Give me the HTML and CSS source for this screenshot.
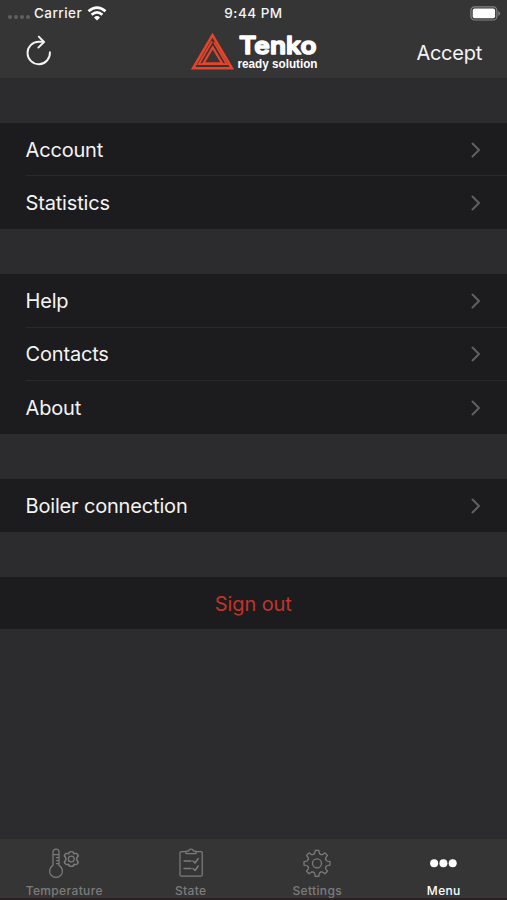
FILE: index.html
```html
<!DOCTYPE html>
<html lang="en">
<head>
<meta charset="utf-8">
<title>Tenko</title>
<link rel="stylesheet" href="styles.css">
</head>
<body>
<div class="app">
  <header class="header">
    <div class="status">
      <div class="carrier">
        <span class="dots"><i></i><i></i><i></i><i></i></span>
        <span class="carrier-name">Carrier</span>
        <svg class="wifi" width="20" height="15" viewBox="0 0 20 15" fill="none" stroke="#fff" stroke-width="2.8"><path d="M1.5 5.3Q10-2 18.5 5.3"/><path d="M4.6 8.7Q10 4 15.4 8.7"/><path d="M7 11.4Q10 8.8 13 11.4L10 14.4Z" fill="#fff" stroke="none"/></svg>
      </div>
      <span class="time">9:44 PM</span>
      <svg class="battery" width="31" height="15" viewBox="0 0 31 15"><rect x=".9" y=".8" width="26" height="13.2" rx="3.8" fill="none" stroke="#858585" stroke-width="1.2"/><rect x="2.7" y="2.6" width="22.4" height="9.6" rx="2" fill="#fff"/><path d="M28.3 5Q30 5.6 30 7.4T28.3 9.8Z" fill="#858585"/></svg>
    </div>
    <div class="nav">
      <svg class="refresh" width="26" height="32" viewBox="0 0 26 32" fill="none" stroke="#f4f4f4" stroke-width="1.9" stroke-linecap="round" stroke-linejoin="round"><path d="M23.9 17.3A11.2 11.2 0 1 1 12.7 6.8H17.6"/><path d="M12.8 1.6L18 7L12.3 12.6"/></svg>
      <svg class="logo" width="128" height="40" viewBox="0 0 128 40">
        <g fill="none" stroke="#e8432b"><path d="M21.5 3.2L2.1 36.3H40.9Z" stroke-width="2.6"/><path d="M21.1 9.2L7.8 32.2H35.8L23 10.2" stroke-width="1.8"/><path d="M21.7 15.5L12.3 31.5H31.3Z" stroke-width="2.3"/></g>
        <text class="brand" x="48" y="21.5" textLength="77.5" lengthAdjust="spacingAndGlyphs">Tenko</text>
        <text class="tagline" x="46.5" y="35.5" textLength="80" lengthAdjust="spacingAndGlyphs">ready solution</text>
      </svg>
      <span class="accept">Accept</span>
    </div>
  </header>
  <main class="content">
    <section class="group">
      <div class="row"><span>Account</span><svg class="chev" viewBox="0 0 10 16"><path d="M1.5 1.5L8 8L1.5 14.5"/></svg></div>
      <div class="row"><span>Statistics</span><svg class="chev" viewBox="0 0 10 16"><path d="M1.5 1.5L8 8L1.5 14.5"/></svg></div>
    </section>
    <section class="group">
      <div class="row"><span>Help</span><svg class="chev" viewBox="0 0 10 16"><path d="M1.5 1.5L8 8L1.5 14.5"/></svg></div>
      <div class="row"><span>Contacts</span><svg class="chev" viewBox="0 0 10 16"><path d="M1.5 1.5L8 8L1.5 14.5"/></svg></div>
      <div class="row"><span>About</span><svg class="chev" viewBox="0 0 10 16"><path d="M1.5 1.5L8 8L1.5 14.5"/></svg></div>
    </section>
    <section class="group">
      <div class="row"><span>Boiler connection</span><svg class="chev" viewBox="0 0 10 16"><path d="M1.5 1.5L8 8L1.5 14.5"/></svg></div>
    </section>
    <section class="group">
      <div class="row signout"><span>Sign out</span></div>
    </section>
  </main>
  <nav class="tabs">
    <div class="tab">
      <svg width="32" height="32" viewBox="0 0 32 32"><path d="M5 18.4V5A3 3 0 0 1 11 5V18.4A6.4 6.4 0 1 1 5 18.4ZM5 7.5H11M8.5 10.5H11M8.5 13.5H11M8.5 16.5H11"/><g transform="translate(23.3 12)"><circle r="2.9"/><path transform="scale(1.24 1.03)" d="M-2.2-5C-2-8 2-8 2.2-5C4.8-6.4 6.7-3.1 4.4-1.3V1.3C6.7 3.1 4.8 6.4 2.2 5C2 8-2 8-2.2 5C-4.8 6.4-6.7 3.1-4.4 1.3V-1.3C-6.7-3.1-4.8-6.4-2.2-5Z"/></g></svg>
      <span>Temperature</span>
    </div>
    <div class="tab">
      <svg width="32" height="32" viewBox="0 0 32 32"><path d="M11 4.5H6.2Q5 4.5 5 5.7V28Q5 29.2 6.2 29.2H26Q27.2 29.2 27.2 28V5.7Q27.2 4.5 26 4.5H21M11 4V6.5H21V4H18.3Q18.3 2 16 2T13.7 4Z"/><path d="M9 14H16M9 21.5H16M18 14L20 16L23.3 11.5M18 21.5L20 23.5L23.3 19" stroke-width="1.5"/></svg>
      <span>State</span>
    </div>
    <div class="tab">
      <svg width="32" height="32" viewBox="0 0 32 32"><defs><path id="tooth" d="M-3.67-8.87Q-2.5-9.3-2.2-10.3L-1.8-13H1.8L2.2-10.3Q2.5-9.3 3.67-8.87"/></defs><g transform="translate(16 16.3)"><circle r="4.5"/><use href="#tooth"/><use href="#tooth" transform="rotate(45)"/><use href="#tooth" transform="rotate(90)"/><use href="#tooth" transform="rotate(135)"/><use href="#tooth" transform="rotate(180)"/><use href="#tooth" transform="rotate(225)"/><use href="#tooth" transform="rotate(270)"/><use href="#tooth" transform="rotate(315)"/></g></svg>
      <span>Settings</span>
    </div>
    <div class="tab active">
      <svg width="32" height="32" viewBox="0 0 32 32"><circle cx="6.1" cy="16.2" r="4"/><circle cx="15.4" cy="16.2" r="4"/><circle cx="24.7" cy="16.2" r="4"/></svg>
      <span>Menu</span>
    </div>
  </nav>
</div>
</body>
</html>
```
FILE: styles.css
```css
* { box-sizing: border-box; }
body { margin: 0; background: #2c2c2e; color: #f4f4f4; font-family: Inter, "Liberation Sans", sans-serif; }
.app { width: 507px; height: 900px; display: flex; flex-direction: column; overflow: hidden; }
.header { height: 78px; background: #353535; flex: none; }
.status { height: 26px; display: grid; grid-template-columns: 1fr auto 1fr; align-items: center; padding: 0 6px 0 8px; font-size: 13.5px; font-weight: 500; }
.carrier { display: flex; align-items: center; }
.dots { display: flex; gap: 2px; margin: 8px 4px 0 0; }
.dots i { width: 4px; height: 4px; border-radius: 50%; background: #606060; }
.carrier-name { letter-spacing: .45px; }
.wifi { margin-left: 5px; }
.time { letter-spacing: .5px; margin-right: 2px; }
.battery { justify-self: end; }
.nav { height: 52px; display: grid; grid-template-columns: 1fr auto 1fr; align-items: center; padding: 0 25px 0 26px; }
.refresh { margin-top: -2px; }
.logo { margin-right: -1px; overflow: visible; }
.brand { font: 600 24px Inter, sans-serif; fill: #fff; stroke: #fff; stroke-width: 1.5px; stroke-linejoin: round; }
.tagline { font: 700 12px "Liberation Sans", sans-serif; fill: #fff; }
.accept { justify-self: end; font-size: 20px; letter-spacing: -.25px; margin-top: 2px; }
.content { flex: 1; display: flex; flex-direction: column; gap: 45.3px; padding-top: 45px; }
.group { background: #1c1c1e; }
.row { height: 52.3px; padding: 1.6px 26px 0; display: flex; align-items: center; justify-content: space-between; font-size: 20px; letter-spacing: -.17px; }
.row + .row { height: 53.7px; background: linear-gradient(#29292b, #29292b) 26px 0 / 100% 1px no-repeat; }
.row span { margin-left: -.5px; }
.chev { width: 10px; height: 16px; fill: none; stroke: #606063; stroke-width: 2; stroke-linecap: round; }
.row.signout { justify-content: center; color: #c0342b; letter-spacing: -.1px; padding-top: 2px; }
.tabs { height: 61px; flex: none; display: flex; background: #353535; border-bottom: 2px solid #2a2023; padding-top: 8px; }
.tab { width: 126.5px; display: flex; flex-direction: column; align-items: center; color: #7c7c7c; font-size: 12px; font-weight: 500; letter-spacing: .35px; line-height: 15px; gap: 4px; padding-left: 2px; }
.tab svg { flex: none; fill: none; stroke: #7c7c7c; stroke-width: 1.25; stroke-linejoin: round; stroke-linecap: round; }
.active { color: #fff; }
.active svg { fill: #fff; stroke: none; }
```
